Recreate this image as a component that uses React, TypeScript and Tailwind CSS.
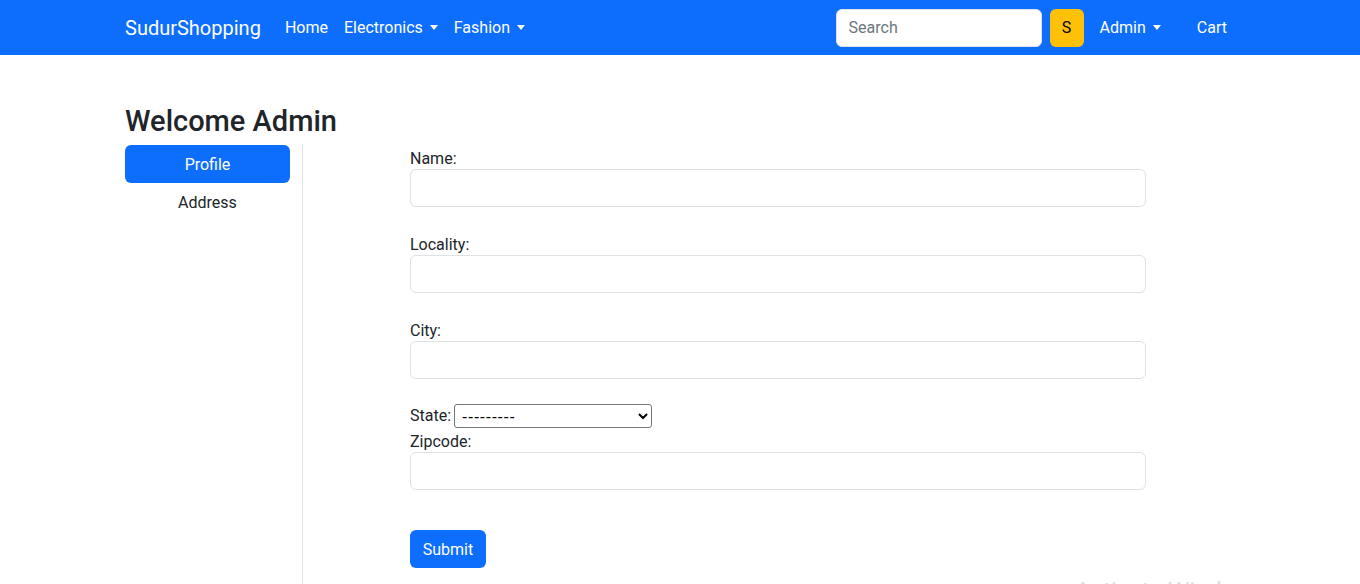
import React from 'react';

const font = { fontFamily: '"Segoe UI", Roboto, "Liberation Sans", Arial, sans-serif' };

const Caret: React.FC = () => (
  <span className="ml-[7px] inline-block align-middle w-0 h-0 border-t-[5px] border-t-current border-x-[4px] border-x-transparent" />
);

const NavLink: React.FC<{ label: string; dropdown?: boolean }> = ({ label, dropdown }) => (
  <a href="#" className="flex items-center px-2 text-white text-base leading-6">
    {label}
    {dropdown && <Caret />}
  </a>
);

const Label: React.FC<{ text: string }> = ({ text }) => (
  <label className="block h-6 pt-1 leading-5 text-base text-[#212529]">{text}</label>
);

const Field: React.FC<{ label: string }> = ({ label }) => (
  <div className="mb-6">
    <Label text={label} />
    <input
      type="text"
      className="block w-full h-[38px] px-3 rounded-[6px] border border-[#dee2e6] bg-white outline-none"
    />
  </div>
);

const App: React.FC = () => {
  return (
    <div className="relative h-[584px] overflow-hidden bg-white text-[#212529]" style={font}>
      {/* Navbar */}
      <nav className="h-[55px] bg-[#0d6efd] flex items-center justify-between pl-[125px] pr-[125px]">
        <div className="flex items-center">
          <a href="#" className="text-white text-[20px] leading-[30px] mr-4">SudurShopping</a>
          <NavLink label="Home" />
          <NavLink label="Electronics" dropdown />
          <NavLink label="Fashion" dropdown />
        </div>
        <div className="flex items-center">
          <input
            type="text"
            placeholder="Search"
            className="w-[206px] h-[38px] px-3 rounded-[6px] bg-white border border-[#dee2e6] text-base placeholder:text-[#6c757d] outline-none"
          />
          <button className="ml-2 w-[34px] h-[38px] rounded-[6px] bg-[#ffc107] text-black text-base">S</button>
          <div className="ml-2">
            <NavLink label="Admin" dropdown />
          </div>
          <div className="ml-[20px]">
            <NavLink label="Cart" />
          </div>
        </div>
      </nav>

      {/* Main */}
      <main className="pl-[125px] pt-[49px]">
        <h3 className="text-[29px] leading-[34px] font-medium mb-[7px]">Welcome Admin</h3>
        <div className="flex">
          <div className="w-[178px] border-r border-[#dee2e6] pr-3">
            <button className="block w-[165px] h-[38px] pt-[2px] rounded-[6px] bg-[#0d6efd] text-white text-base">Profile</button>
            <button className="block w-[165px] h-[38px] pt-[2px] text-base text-[#212529]">Address</button>
          </div>
          <form className="ml-[107px] w-[736px] pb-12" onSubmit={(e) => e.preventDefault()}>
            <Field label="Name:" />
            <Field label="Locality:" />
            <Field label="City:" />
            <div className="flex items-center h-[25px] pt-[1px] text-base leading-6">
              <label>State:</label>
              <select
                className="ml-[3px] w-[198px] h-[24px] pl-[3px] border border-[#767676] rounded-[3px] bg-white text-base tracking-[0.6px] text-black"
                style={{ fontFamily: '"Liberation Sans", Arial, sans-serif' }}
              >
                <option>---------</option>
              </select>
            </div>
            <div className="mb-10">
              <Label text="Zipcode:" />
              <input
                type="text"
                className="block w-full h-[38px] px-3 rounded-[6px] border border-[#dee2e6] bg-white outline-none"
              />
            </div>
            <button type="submit" className="w-[76px] h-[38px] pt-[2px] rounded-[6px] bg-[#0d6efd] text-white text-base">Submit</button>
          </form>
        </div>
      </main>

      {/* Windows watermark, cut off at the bottom */}
      <div className="absolute left-[1075px] top-[575px] text-[24px] leading-8 text-[#dcdcdc] whitespace-nowrap pointer-events-none">
        Activate Windows
      </div>
    </div>
  );
};

export default App;
